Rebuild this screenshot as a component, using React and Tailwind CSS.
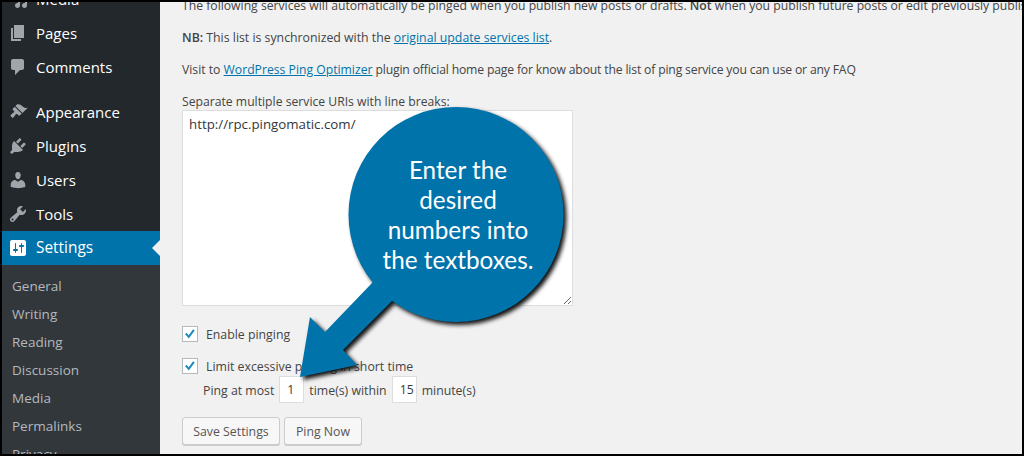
const FONT = "font-['Open_Sans','Noto_Sans',sans-serif]";

const paths = {
  media: "M13 11V4c0-.55-.45-1-1-1h-1.67L9 1H5L3.67 3H2c-.55 0-1 .45-1 1v7c0 .55.45 1 1 1h10c.55 0 1-.45 1-1zM7 4.5c1.38 0 2.5 1.12 2.5 2.5S8.38 9.5 7 9.5 4.5 8.38 4.5 7 5.62 4.5 7 4.5zM14 6h5v10.5c0 1.38-1.12 2.5-2.5 2.5S14 17.88 14 16.5s1.12-2.5 2.5-2.5c.17 0 .34.02.5.05V9h-3V6zm-4 8.05V13h2v3.5c0 1.38-1.12 2.5-2.5 2.5S7 17.88 7 16.5 8.12 14 9.5 14c.17 0 .34.02.5.05z",
  pages: "M6 15V2h10v13H6zm-1 1h8v2H3V5h2v11z",
  comments: "M5 2h9c1.1 0 2 .9 2 2v7c0 1.1-.9 2-2 2h-2l-5 5v-5H5c-1.1 0-2-.9-2-2V4c0-1.1.9-2 2-2z",
  appearance: "M14.48 11.06L7.41 3.99l1.5-1.5c.5-.56 2.3-.47 3.51.32 1.21.8 1.43 1.28 2.91 2.1 1.18.64 2.45 1.26 4.45.85zm-.71.71L6.7 4.7 4.93 6.47c-.39.39-.39 1.02 0 1.41l1.06 1.06c.39.39.39 1.03 0 1.42-.6.6-1.43 1.11-2.21 1.69-.35.26-.7.53-1.01.84-.39.39-.39 1.03 0 1.42l1.2 1.2c.39.39 1.03.39 1.42 0 .31-.31.58-.66.84-1.01.58-.78 1.09-1.61 1.69-2.21.39-.39 1.03-.39 1.42 0l1.06 1.06c.39.39 1.02.39 1.41 0z",
  plugins: "M13.11 4.36L9.87 7.6 8 5.73l3.24-3.24c.35-.34 1.05-.2 1.56.32.52.51.66 1.21.31 1.55zm-8 1.77l.91-1.12 9.01 9.01-1.19.84c-.71.71-2.63 1.16-3.82 1.16H6.14L4.9 17.26c-.59.59-1.54.59-2.12 0-.59-.58-.59-1.53 0-2.12l1.24-1.24v-3.88c0-1.13.4-3.19 1.09-3.89zm7.26 3.97l3.24-3.24c.34-.35 1.04-.21 1.55.31.52.51.66 1.21.31 1.55l-3.24 3.25z",
  users: "M10 9.25c-2.27 0-2.73-3.44-2.73-3.44C7 4.02 7.82 2 9.97 2c2.16 0 2.98 2.02 2.71 3.81 0 0-.41 3.44-2.68 3.44zm0 2.57L12.72 10c2.39 0 4.52 2.33 4.52 4.53v2.49s-3.65 1.13-7.24 1.13c-3.65 0-7.24-1.13-7.24-1.13v-2.49c0-2.25 1.94-4.48 4.47-4.48z",
  tools: "M16.68 9.77c-1.34 1.34-3.3 1.67-4.95.99l-5.41 6.52c-.99.99-2.59.99-3.58 0s-.99-2.59 0-3.57l6.52-5.42c-.68-1.65-.35-3.61.99-4.95 1.28-1.28 3.12-1.62 4.72-1.06l-2.89 2.89 2.82 2.82 2.86-2.87c.53 1.58.18 3.39-1.08 4.65zM3.81 16.21c.4.39 1.04.39 1.43 0 .4-.4.4-1.04 0-1.43-.39-.4-1.03-.4-1.43 0-.39.39-.39 1.03 0 1.43z",
  settings: "M18 16V4c0-1.1-.9-2-2-2H4c-1.1 0-2 .9-2 2v12c0 1.1.9 2 2 2h12c1.1 0 2-.9 2-2zM8 11h1c.55 0 1 .45 1 1s-.45 1-1 1H8v1.5c0 .28-.22.5-.5.5s-.5-.22-.5-.5V13H6c-.55 0-1-.45-1-1s.45-1 1-1h1V5.5c0-.28.22-.5.5-.5s.5.22.5.5V11zm5-2h-1c-.55 0-1-.45-1-1s.45-1 1-1h1V5.5c0-.28.22-.5.5-.5s.5.22.5.5V7h1c.55 0 1 .45 1 1s-.45 1-1 1h-1v5.5c0 .28-.22.5-.5.5s-.5-.22-.5-.5V9z",
};

function Icon({ name, color = "#a0a5aa" }) {
  return (
    <svg viewBox="0 0 20 20" className="w-5 h-5 shrink-0" fill={color} fillRule="evenodd">
      <path d={paths[name]} />
    </svg>
  );
}

function MenuItem({ icon, label, active }) {
  return (
    <div className={`relative flex items-center h-[34px] pl-[6px] gap-[8px] text-[15px] text-white ${active ? "bg-[#0073aa]" : ""}`}>
      <Icon name={icon} color={active ? "#ffffff" : "#a0a5aa"} />
      <span className={active ? "text-[15.4px]" : "pb-px"}>{label}</span>
      {active && (
        <span className="absolute right-0 top-1/2 -translate-y-1/2 w-0 h-0 border-y-[8px] border-y-transparent border-r-[8px] border-r-[#f1f1f1]" />
      )}
    </div>
  );
}

function Check({ label }) {
  return (
    <div className="flex items-center h-[18px] gap-[8px]">
      <span className="w-4 h-4 bg-white border border-[#b4b9be] flex items-center justify-center">
        <svg viewBox="0 0 16 16" className="w-[14px] h-[14px]">
          <path d="M2.5 8.2l1.6-1.5 2.4 2.6 5-6.6 1.9 1.3-6.7 9z" fill="#1e8cbe" />
        </svg>
      </span>
      <span className="pt-[2px]">{label}</span>
    </div>
  );
}

function NumBox({ value, className }) {
  return (
    <span className={`h-[27px] w-[25px] bg-white border border-[#dddddd] flex items-center pl-[7px] overflow-hidden text-[#32373c] ${className}`}>
      {value}
    </span>
  );
}

function Btn({ children, className }) {
  return (
    <span className={`h-[28px] pt-[2px] flex items-center justify-center rounded-[3px] border border-[#cccccc] bg-[#f7f7f7] text-[#555555] shadow-[0_1px_0_#cccccc] ${className}`}>
      {children}
    </span>
  );
}

export default function App() {
  return (
    <div className={`relative w-[1024px] h-[456px] border-2 border-black bg-[#f1f1f1] flex overflow-hidden text-[12.2px] leading-[18px] text-[#444444] ${FONT}`}>
      <aside className="w-[158px] shrink-0 bg-[#23282d] overflow-hidden">
        <div className="-mt-[20px]">
          <MenuItem icon="media" label="Media" />
          <MenuItem icon="pages" label="Pages" />
          <MenuItem icon="comments" label="Comments" />
          <div className="h-[11px]" />
          <MenuItem icon="appearance" label="Appearance" />
          <MenuItem icon="plugins" label="Plugins" />
          <MenuItem icon="users" label="Users" />
          <MenuItem icon="tools" label="Tools" />
          <MenuItem icon="settings" label="Settings" active />
          <div className="bg-[#32373c] pt-[7px] pb-[20px] text-[13.5px] text-[#b4b9be]">
            {["General", "Writing", "Reading", "Discussion", "Media", "Permalinks", "Privacy"].map((s) => (
              <div key={s} className="h-[28px] flex items-center pl-[10px]">{s}</div>
            ))}
          </div>
        </div>
      </aside>

      <main className="flex-1 min-w-0 pl-[22px] overflow-hidden">
        <div className="-mt-[5px] flex flex-col gap-[14px] whitespace-nowrap">
          <p>The following services will automatically be pinged when you publish new posts or drafts. <b className="font-semibold">Not</b> when you publish future posts or edit previously published posts.</p>
          <p className="text-[12.3px]"><b className="font-semibold">NB:</b> This list is synchronized with the <a className="text-[#0073aa] underline">original update services list</a>.</p>
          <p>Visit to <a className="text-[#0073aa] underline">WordPress Ping Optimizer</a><span className="tracking-[-0.17px]"> plugin official home page for know about the list of ping service you can use or any FAQ</span></p>
        </div>
        <p className="mt-[14px] h-[17px]">Separate multiple service URIs with line breaks:</p>
        <textarea
          readOnly
          value="http://rpc.pingomatic.com/"
          className="block w-[391px] h-[196px] bg-white border border-[#dddddd] px-[6px] pt-[4px] pb-[3px] text-[13.3px] text-[#32373c] outline-none"
        />
        <div className="text-[12.3px]">
          <div className="mt-[19px]"><Check label="Enable pinging" /></div>
          <div className="mt-[14px]"><Check label="Limit excessive pinging in short time" /></div>
          <div className="mt-px flex items-center h-[27px] pl-[21px]">
            <span className="pt-[2px]">Ping at most</span>
            <NumBox value="1" className="ml-[5px]" />
            <span className="ml-[5px] pt-[2px]">time(s) within</span>
            <NumBox value="15" className="ml-[5px]" />
            <span className="ml-[5px] pt-[2px]">minute(s)</span>
          </div>
          <div className="mt-[14px] flex gap-[4px]">
            <Btn className="w-[98px]">Save Settings</Btn>
            <Btn className="w-[78px]">Ping Now</Btn>
          </div>
        </div>
      </main>

      {/* Annotation overlay */}
      <svg className="absolute left-[-2px] top-[-2px] w-[1024px] h-[456px] pointer-events-none drop-shadow-[3px_3px_2px_#111111]" viewBox="0 0 1024 456">
        <circle cx="456" cy="214.5" r="107.5" fill="#0073aa" />
        <path d="M373 282 L325 332 L310 317 L300 377 L357 365 L343 350 L393 300 Z" fill="#0073aa" />
      </svg>
      <div className="absolute left-[349px] top-[153px] w-[214px] text-center text-white text-[24.3px] leading-[30px] font-['Lato','Open_Sans',sans-serif]">
        Enter the<br />desired<br />numbers into<br />the textboxes.
      </div>
    </div>
  );
}
